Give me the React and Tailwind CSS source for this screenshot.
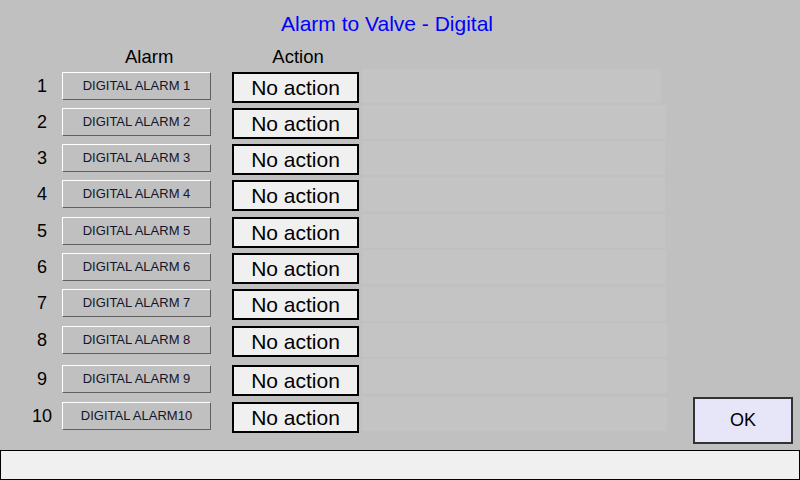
import React from "react"

const rows = [
  { n: 1, label: "DIGITAL ALARM 1", h: "h-[36px]", off: "mt-[3px]", panelW: "w-[299px]" },
  { n: 2, label: "DIGITAL ALARM 2", h: "h-[36px]", off: "mt-[3px]", panelW: "w-[304px]" },
  { n: 3, label: "DIGITAL ALARM 3", h: "h-[36px]", off: "mt-[3px]", panelW: "w-[303px]" },
  { n: 4, label: "DIGITAL ALARM 4", h: "h-[37px]", off: "mt-[3px]", panelW: "w-[303px]" },
  { n: 5, label: "DIGITAL ALARM 5", h: "h-[36px]", off: "mt-[3px]", panelW: "w-[303px]" },
  { n: 6, label: "DIGITAL ALARM 6", h: "h-[37px]", off: "mt-[3px]", panelW: "w-[304px]" },
  { n: 7, label: "DIGITAL ALARM 7", h: "h-[36px]", off: "mt-[2px]", panelW: "w-[304px]" },
  { n: 8, label: "DIGITAL ALARM 8", h: "h-[36px]", off: "mt-[3px]", panelW: "w-[305px]" },
  { n: 9, label: "DIGITAL ALARM 9", h: "h-[38px]", off: "mt-[6px]", panelW: "w-[305px]" },
  { n: 10, label: "DIGITAL ALARM10", h: "h-[36px]", off: "mt-[5px]", panelW: "w-[305px]" },
]

function AlarmRow({ row }) {
  return (
    <div className={`flex items-start ${row.h}`}>
      {/* row number */}
      <div className={`ml-[30px] w-[24px] text-center text-[18px] leading-none text-black ${row.off}`}>
        <div className="mt-[5px]">{row.n}</div>
      </div>

      {/* alarm name button */}
      <div
        className={`ml-[8px] w-[149px] h-[28px] flex items-center justify-center border-t border-l border-t-white border-l-white border-b border-r border-b-[#606060] border-r-[#606060] text-[13px] text-[#14142a] ${row.off}`}
      >
        {row.label}
      </div>

      {/* action box */}
      <div
        className={`ml-[21px] w-[127px] h-[31px] flex items-center justify-center border-2 border-black bg-[#f0f0f0] text-[21px] leading-none text-black ${row.off}`}
      >
        No action
      </div>

      {/* faint slot panel */}
      <div className={`ml-[3px] h-[34px] bg-[#c4c4c4] ${row.panelW}`} />
    </div>
  )
}

export default function App() {
  return (
    <div
      className="w-[800px] h-[480px] bg-[#c0c0c0] flex flex-col overflow-hidden"
      style={{ fontFamily: '"Liberation Sans", Arial, sans-serif' }}
    >
      <h1 className="mt-[13px] pr-[26px] text-center text-[21px] leading-none text-[#0000ff]">
        Alarm to Valve - Digital
      </h1>

      <div className="mt-[14px] flex pl-[125px] text-[18.5px] leading-none text-black h-[19px]">
        <span>Alarm</span>
        <span className="ml-[99px]">Action</span>
      </div>

      <div className="flex flex-1">
        <div className="mt-[2px] flex flex-col">
          {rows.map((r) => (
            <AlarmRow key={r.n} row={r} />
          ))}
        </div>

        <div className="flex-1 flex flex-col justify-end items-end pr-[7px] pb-[6px]">
          <button className="w-[100px] h-[47px] bg-[#e6e6f8] border-2 border-[#333333] text-[18px] text-black">
            OK
          </button>
        </div>
      </div>

      {/* status bar */}
      <div className="h-[30px] bg-[#f0f0f0] border border-black" />
    </div>
  )
}
